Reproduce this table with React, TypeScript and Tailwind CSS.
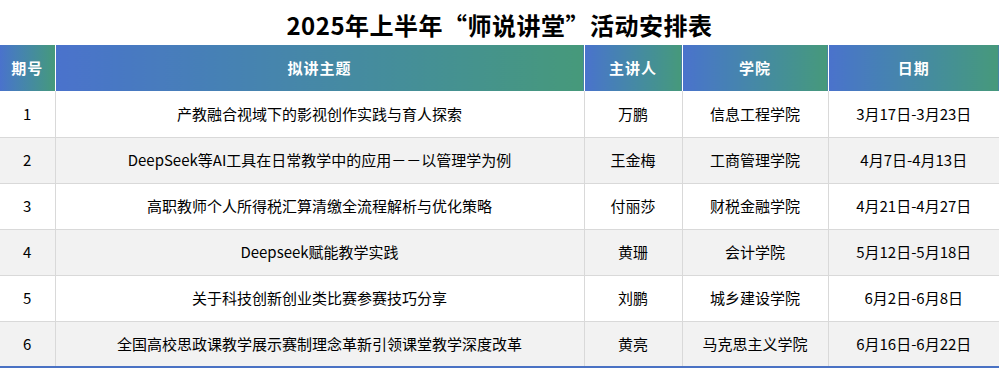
const HEADERS = ["期号", "拟讲主题", "主讲人", "学院", "日期"];

const ROWS = [
  { no: "1", topic: "产教融合视域下的影视创作实践与育人探索", speaker: "万鹏", college: "信息工程学院", date: "3月17日-3月23日" },
  { no: "2", topic: "DeepSeek等AI工具在日常教学中的应用－－以管理学为例", speaker: "王金梅", college: "工商管理学院", date: "4月7日-4月13日" },
  { no: "3", topic: "高职教师个人所得税汇算清缴全流程解析与优化策略", speaker: "付丽莎", college: "财税金融学院", date: "4月21日-4月27日" },
  { no: "4", topic: "Deepseek赋能教学实践", speaker: "黄珊", college: "会计学院", date: "5月12日-5月18日" },
  { no: "5", topic: "关于科技创新创业类比赛参赛技巧分享", speaker: "刘鹏", college: "城乡建设学院", date: "6月2日-6月8日" },
  { no: "6", topic: "全国高校思政课教学展示赛制理念革新引领课堂教学深度改革", speaker: "黄亮", college: "马克思主义学院", date: "6月16日-6月22日" },
];

export default function App() {
  return (
    <div className="w-[999px] h-[368px] overflow-hidden bg-white font-['Noto_Sans_CJK_SC',sans-serif] text-black">
      <div className="h-[45px] flex items-center justify-center pt-[4px]">
        <h1 className="text-[24px] font-bold leading-none tracking-[0.5px]">2025年上半年“师说讲堂”活动安排表</h1>
      </div>
      <table className="w-[999px] table-fixed border-collapse">
        <colgroup>
          <col className="w-[55px]" />
          <col className="w-[529px]" />
          <col className="w-[98px]" />
          <col className="w-[146px]" />
          <col className="w-[171px]" />
        </colgroup>
        <thead>
          <tr className="h-[46px]">
            {HEADERS.map((h, i) => (
              <th
                key={h}
                className={`p-0 text-[15px] font-bold text-white tracking-[1px] bg-linear-to-r from-[#4a72cc] to-[#46997a] ${
                  i > 0 ? "border-l border-white" : ""
                }`}
              >
                {h}
              </th>
            ))}
          </tr>
        </thead>
        <tbody>
          {ROWS.map((r, i) => (
            <tr
              key={r.no}
              className={`h-[46px] text-[15px] text-center ${i % 2 === 1 ? "bg-[#f2f2f2]" : "bg-white"} ${
                i === ROWS.length - 1 ? "border-b-2 border-b-[#4a72c4]" : "border-b border-b-[#d9d9d9]"
              }`}
            >
              <td className="p-0">{r.no}</td>
              <td className="p-0 border-l border-[#d9d9d9]">{r.topic}</td>
              <td className="p-0 border-l border-[#d9d9d9]">{r.speaker}</td>
              <td className="p-0 border-l border-[#d9d9d9]">{r.college}</td>
              <td className="p-0 border-l border-[#d9d9d9]">{r.date}</td>
            </tr>
          ))}
        </tbody>
      </table>
    </div>
  );
}
